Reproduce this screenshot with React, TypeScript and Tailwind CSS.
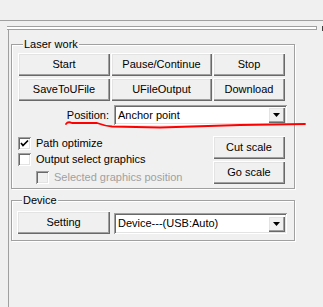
import React from "react";

// Classic Win32 style controls
const raised =
  "bg-[#f0f0f0] shadow-[inset_1px_1px_#ffffff,inset_-1px_-1px_#696969,inset_-2px_-2px_#a0a0a0,inset_2px_2px_#e3e3e3]";
const sunken =
  "shadow-[inset_1px_1px_#a0a0a0,inset_-1px_-1px_#ffffff,inset_2px_2px_#696969,inset_-2px_-2px_#e3e3e3]";
const etched = "border border-[#a0a0a0] shadow-[inset_1px_1px_#ffffff,1px_1px_#ffffff]";

function Btn({ label, w }: { label: string; w: string }) {
  return (
    <div className={`${raised} ${w} flex h-[23px] shrink-0 items-center justify-center`}>
      {label}
    </div>
  );
}

function Combo({ text, h }: { text: string; h: string }) {
  return (
    <div className={`${sunken} ${h} flex w-[173px] shrink-0 items-center bg-white`}>
      <span className="flex-1 pl-[4px]">{text}</span>
      <div className={`${raised} mr-[2px] flex h-[16px] w-[17px] items-center justify-center`}>
        <svg width="7" height="4" viewBox="0 0 7 4">
          <polygon points="0,0 7,0 3.5,4" fill="#000" />
        </svg>
      </div>
    </div>
  );
}

function Check({ label, checked = false, disabled = false }: { label: string; checked?: boolean; disabled?: boolean }) {
  return (
    <div className="flex h-[13px] items-center">
      <div className={`${sunken} h-[13px] w-[13px] shrink-0 ${disabled ? "bg-[#f0f0f0]" : "bg-white"}`}>
        {checked && (
          <svg width="13" height="13" viewBox="0 0 13 13">
            <polyline points="3,6 5,8.5 10,3.5" fill="none" stroke="#000" strokeWidth="1.7" />
          </svg>
        )}
      </div>
      <span className={`ml-[5px] whitespace-nowrap ${disabled ? "text-[#a0a0a0]" : ""}`}>{label}</span>
    </div>
  );
}

export default function App() {
  return (
    <div className="relative h-[307px] w-[323px] overflow-hidden bg-[#f0f0f0] font-['Liberation_Sans',Arial,sans-serif] text-[11px] leading-[13px] text-black">
      <div className="h-[20px]" />
      <div className="h-px bg-[#a0a0a0]" />
      <div className="ml-[8px] h-[285px] border-b border-l border-[#a0a0a0]">
        <div className="mt-[5px] flex items-start">
          <div className="ml-[-2px] h-[4px] w-[310px] border-b border-r border-t border-[#a0a0a0] bg-white" />
          <div className="ml-[5px] h-[5px] w-px bg-[#404040]" />
        </div>

        <fieldset className={`${etched} ml-[2px] mt-[7px] w-[284px] pb-[4px] pl-[6px] pt-[2px]`}>
          <legend className="ml-[5px] bg-[#f0f0f0] px-px">Laser work</legend>
          <div className="flex gap-px">
            <Btn label="Start" w="w-[92px]" />
            <Btn label="Pause/Continue" w="w-[101px]" />
            <Btn label="Stop" w="w-[72px]" />
          </div>
          <div className="mt-[2px] flex gap-px">
            <Btn label="SaveToUFile" w="w-[92px]" />
            <Btn label="UFileOutput" w="w-[101px]" />
            <Btn label="Download" w="w-[72px]" />
          </div>
          <div className="mt-[4px] flex items-center">
            <span className="w-[96px] pr-[5px] text-right">Position:</span>
            <Combo text="Anchor point" h="h-[20px]" />
          </div>
          <div className="mt-[11px] flex">
            <div className="flex w-[195px] flex-col">
              <div className="mt-px">
                <Check label="Path optimize" checked />
              </div>
              <div className="mt-[3px]">
                <Check label="Output select graphics" />
              </div>
              <div className="ml-[18px] mt-[5px]">
                <Check label="Selected graphics position" disabled />
              </div>
            </div>
            <div className="flex flex-col gap-[2px]">
              <Btn label="Cut scale" w="w-[72px]" />
              <Btn label="Go scale" w="w-[72px]" />
            </div>
          </div>
        </fieldset>

        <fieldset className={`${etched} ml-[2px] mt-[5px] w-[284px] pb-[6px] pl-[5px] pt-[4px]`}>
          <legend className="ml-[5px] bg-[#f0f0f0] px-px">Device</legend>
          <div className="flex items-end">
            <Btn label="Setting" w="w-[93px]" />
            <div className="ml-[4px]">
              <Combo text="Device---(USB:Auto)" h="h-[21px]" />
            </div>
          </div>
        </fieldset>
      </div>

      <svg className="pointer-events-none absolute left-0 top-0" width="323" height="307">
        <path
          d="M66,124 Q68,121 72,123 L97,123 Q105,126 112,126.5 L160,127.5 Q200,126 240,125 L305,124"
          fill="none"
          stroke="#ff0000"
          strokeWidth="1.8"
          strokeLinecap="round"
        />
      </svg>
    </div>
  );
}
